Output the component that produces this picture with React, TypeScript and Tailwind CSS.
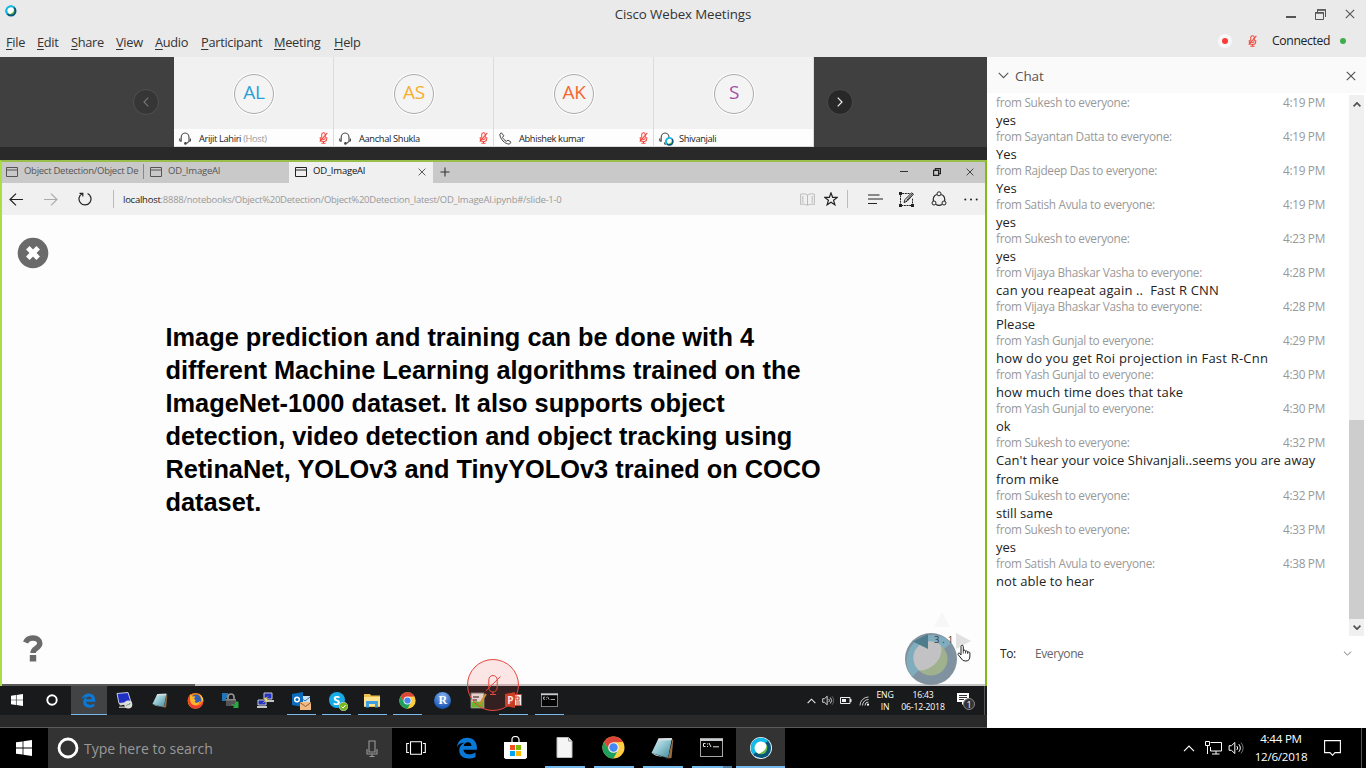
import React from "react";

type IconProps = { w: number; h: number; box?: string; className?: string; children: React.ReactNode };

function Svg({ w, h, box, className = "", children }: IconProps) {
  return (
    <svg width={w} height={h} viewBox={box ?? `0 0 ${w} ${h}`} fill="none" className={`shrink-0 ${className}`}>
      {children}
    </svg>
  );
}

function WebexBall({ size }: { size: number }) {
  return (
    <Svg w={size} h={size} box="0 0 24 24">
      <circle cx="12" cy="12" r="12" fill="#e9f4f8" />
      <circle cx="12" cy="12" r="11" fill="#07557c" />
      <path d="M3.6 19.2A11 11 0 0 1 19.5 4L12 12Z" fill="#12bbea" />
      <circle cx="12" cy="12" r="6.9" fill="#6fbe4a" />
      <path d="M5.6 14.6A6.9 6.9 0 0 1 17.8 8.2Q18.6 15 9.6 18.3Q6.6 17 5.6 14.6Z" fill="#fff" />
    </Svg>
  );
}

function MutedMic() {
  return (
    <Svg w={9} h={12} box="0 0 9 13">
      <g stroke="#f0463c" strokeWidth="1.1">
        <rect x="2.6" y="0.7" width="3.8" height="7.4" rx="1.9" />
        <path d="M1 5.5v1.7a3.5 3 0 0 0 7 0V5.5M4.5 10.2v2M2.2 12.3h4.6M8.7 1L.4 10.4" />
      </g>
    </Svg>
  );
}

function Headset() {
  return (
    <Svg w={12} h={13}>
      <path d="M2.7 9.2H1.6a1 1 0 0 1-.9-1V6.6M2.2 5.4v3.8M2.2 5.6a3.9 4.6 0 0 1 7.8 0v3.6M10 9.2h.5a1 1 0 0 0 1-1V6.4M9.6 9.4c-.3 1.3-1.2 1.8-2.3 2" stroke="#444" strokeWidth="1.1" />
      <circle cx="6.4" cy="11.4" r="1.3" fill="#444" />
    </Svg>
  );
}

function Phone() {
  return (
    <Svg w={13} h={13}>
      <path d="M.8 2.2L2.4.8l2.4 3-1.3 1.5c.8 1.7 2 3 3.8 4l1.7-1.2 3 2.1-1.5 1.9C6 12.3 1 7 .8 2.2Z" stroke="#444" strokeWidth="1" strokeLinejoin="round" />
    </Svg>
  );
}

function CloseX({ size, color = "#444", sw = 1.1 }: { size: number; color?: string; sw?: number }) {
  return (
    <Svg w={size} h={size} box="0 0 10 10">
      <path d="M.8.8l8.4 8.4M9.2.8L.8 9.2" stroke={color} strokeWidth={sw} />
    </Svg>
  );
}

function EdgeLogo({ size }: { size: number }) {
  return (
    <Svg w={size} h={size} box="0 0 24 24">
      <path
        d="M1 10.800C1.900 4.200 6.700.8 12.200.8 18.600.8 22.800 5.200 22.800 11.400v2.500H8.200c.2 3.300 3 4.900 6.400 4.900 2.500 0 4.700-.8 6.700-2v4.900c-2.200 1.200-4.700 1.800-7.500 1.800-6.200 0-10.300-3.400-10.300-8.700 0-3.900 2.200-7 5.600-8.500C5.700 6.200 2.800 7.800 1 10.800ZM8.400 9.900h8.500c0-2.500-1.200-4.300-3.900-4.300-2.500 0-4.200 1.800-4.600 4.300Z"
        fill="#0a78d7"
      />
    </Svg>
  );
}

function Chrome({ size }: { size: number }) {
  return (
    <Svg w={size} h={size} box="0 0 24 24">
      <circle cx="12" cy="12" r="11.500" fill="#ffcd41" />
      <path d="M2.040 6.250A11.500 11.500 0 0 1 21.960 6.250L12 6.600 7.300 14.700Z" fill="#dc4437" />
      <path d="M2.040 6.250L7.300 14.700 12 17.400 16.700 14.700 12 23.500A11.500 11.500 0 0 1 2.040 6.250Z" fill="#1da05e" />
      <circle cx="12" cy="12" r="5.600" fill="#f3f3f3" />
      <circle cx="12" cy="12" r="4.400" fill="#4688f1" />
    </Svg>
  );
}

function WindowsLogo({ size }: { size: number }) {
  return (
    <Svg w={size} h={size} box="0 0 16 16">
      <path d="M0 2.300L6.600 1.400V7.600H0ZM7.400 1.300L16 0V7.600H7.400ZM0 8.400H6.600V14.600L0 13.700ZM7.400 8.400H16V16L7.400 14.700Z" fill="#fff" />
    </Svg>
  );
}

function NotepadIcon({ w, h }: { w: number; h: number }) {
  return (
    <Svg w={w} h={h} box="0 0 22 22">
      <defs>
        <linearGradient id="pad" x1="0" y1="0" x2="1" y2="1">
          <stop offset="0" stopColor="#e4f4f5" />
          <stop offset="0.500" stopColor="#8dc4cf" />
          <stop offset="1" stopColor="#3e8496" />
        </linearGradient>
      </defs>
      <path d="M21 2l.8 1-1.800 18-3.500.6Z" fill="#9a6a3c" />
      <path d="M0 16L14 21 17 21.500 4 18.500Z" fill="#d6e6e8" />
      <path d="M7 1.500L20.500 1 16.500 21 0 16Z" fill="url(#pad)" />
      <path d="M7 1.500l13.500-.5-.5 2.200-13.900.3Z" fill="#d9dfe0" />
    </Svg>
  );
}

function CmdIcon({ w, h }: { w: number; h: number }) {
  return (
    <Svg w={w} h={h} box="0 0 23 19">
      <rect x="0.500" y="0.500" width="22" height="18" fill="#050505" stroke="#a9a9a9" />
      <path d="M0 1h23v2H0Z" fill="#c8ccd0" />
      <path d="M5.500 5.500H3.500V8.500H5.500M7.500 5.500v1M7.500 8v1M9 5l2 4M13 8.800h6" stroke="#e5e5e5" strokeWidth="1" />
    </Svg>
  );
}

function Caret({ w, h, dir, color, sw = 1.200 }: { w: number; h: number; dir: "up" | "down" | "left" | "right"; color: string; sw?: number }) {
  const d = { up: "M.7 5.300L5 1l4.300 4.300", down: "M.7.7L5 5 9.300.7", left: "M5.300.7L1 5l4.300 4.300", right: "M.7.7L5 5 .7 9.300" }[dir];
  const box = dir === "up" || dir === "down" ? "0 0 10 6" : "0 0 6 10";
  return (
    <Svg w={w} h={h} box={box}>
      <path d={d} stroke={color} strokeWidth={sw} />
    </Svg>
  );
}

function Speaker({ w, h }: { w: number; h: number }) {
  return (
    <Svg w={w} h={h} box="0 0 16 14">
      <path d="M.6 4.700H3L6.300 1.500V12.500L3 9.300H.6Z" stroke="#fff" />
      <path d="M8.300 5a3 3 0 0 1 0 4M10.300 3.200a5.500 5.500 0 0 1 0 7.600" stroke="#fff" />
      <path d="M12.500 1.600a8 8 0 0 1 0 10.800" stroke="#777" />
    </Svg>
  );
}

/* ---------- Title and menu ---------- */

const menu = [
  ["File", "w-[31px]"],
  ["Edit", "w-[34px]"],
  ["Share", "w-[45px]"],
  ["View", "w-[39px]"],
  ["Audio", "w-[46px]"],
  ["Participant", "w-[73px]"],
  ["Meeting", "w-[60px]"],
  ["Help", "w-[40px]"],
];

function TopBar() {
  return (
    <header className="h-[57px] shrink-0 bg-[#eaeaea] text-[#333]">
      <div className="grid h-[28px] grid-cols-[1fr_auto_1fr] items-center">
        <div className="-mt-[6px] pl-[5px]"><WebexBall size={12} /></div>
        <div className="pt-px text-[13.300px] tracking-[-0.100px]">Cisco Webex Meetings</div>
        <div className="flex items-center justify-end gap-[19px] pr-[11px]">
          <div className="mt-[5px] h-[2px] w-[10px] bg-[#555]" />
          <Svg w={11} h={11}>
            <path d="M.5 3.500h8v7h-8ZM2.500 3V.8h8V8" stroke="#555" />
            <path d="M0 4h9M2 1h9" stroke="#555" strokeWidth="1.600" />
          </Svg>
          <CloseX size={10} color="#555" />
        </div>
      </div>
      <div className="flex h-[29px] items-center justify-between">
        <nav className="flex items-center pl-[6px] text-[12.800px] tracking-[-0.300px]">
          {menu.map(([name, width]) => (
            <span key={name} className={width}>
              <span className="underline decoration-1 underline-offset-2">{name[0]}</span>
              {name.slice(1)}
            </span>
          ))}
        </nav>
        <div className="-mt-[3px] flex items-center pr-[20px]">
          <div className="mr-[16px] flex size-[14px] items-center justify-center rounded-full bg-[#f8f8f8]">
            <div className="size-[6px] rounded-full bg-[#fb3b35]" />
          </div>
          <MutedMic />
          <span className="ml-[15px] w-[68px] text-[12.200px] tracking-[-0.350px] text-[#222]">Connected</span>
          <div className="size-[6px] rounded-full bg-[#3fae49]" />
        </div>
      </div>
    </header>
  );
}

/* ---------- Participants ---------- */

const people = [
  { initials: "AL", name: "Arijit Lahiri", host: true, color: "text-[#2a9fd8]", device: "headset", muted: true },
  { initials: "AS", name: "Aanchal Shukla", host: false, color: "text-[#f9ae2b]", device: "headset", muted: true },
  { initials: "AK", name: "Abhishek kumar", host: false, color: "text-[#f4662f]", device: "phone", muted: true },
  { initials: "S", name: "Shivanjali", host: false, color: "text-[#a34fa8]", device: "presenter", muted: false },
];

function Participants() {
  return (
    <div className="flex h-[90px] shrink-0 bg-[#404040]">
      <div className="flex w-[174px] items-center justify-end pr-[15px]">
        <div className="flex size-[26px] items-center justify-center rounded-full border border-[#505050] bg-[#363636]">
          <Caret w={6} h={10} dir="left" color="#747474" />
        </div>
      </div>
      {people.map((p) => (
        <div key={p.name} className="flex w-[160px] flex-col border-r border-b border-[#dcdcdc] bg-[#f1f1f1]">
          <div className="flex h-[72px] items-center justify-center pt-px pl-px">
            <div className="flex size-[42px] items-center justify-center rounded-full bg-white">
              <div className={`flex size-[40px] items-center justify-center rounded-full border border-[#aaa] bg-[#f4f4f4] pb-[2px] text-[19px] tracking-[-0.3px] ${p.color}`}>{p.initials}</div>
            </div>
          </div>
          <div className="flex h-[17px] items-center bg-[#fdfdfd] pt-px pl-[5px] text-[9.300px] tracking-[-0.350px] text-[#222]">
            <div className="relative mr-[7px] w-[13px]">
              {p.device === "phone" ? <Phone /> : <Headset />}
              {p.device === "presenter" && (
                <div className="absolute top-[5px] left-[6px]"><WebexBall size={9} /></div>
              )}
            </div>
            <span className="flex-1 pt-[2px] whitespace-nowrap">
              {p.name}
              {p.host && <span className="text-[#999]"> (Host)</span>}
            </span>
            {p.muted && <div className="mr-[5px]"><MutedMic /></div>}
          </div>
        </div>
      ))}
      <div className="flex flex-1 items-center pl-[13px]">
        <div className="flex size-[26px] items-center justify-center rounded-full border border-[#4a4a4a] bg-[#282828]">
          <Caret w={6} h={10} dir="right" color="#eee" />
        </div>
      </div>
    </div>
  );
}

/* ---------- Shared browser ---------- */

function PageGlyph({ color }: { color: string }) {
  return (
    <Svg w={12} h={10}>
      <path d="M.5.5h11v9H.5ZM.5 3h11" stroke={color} />
    </Svg>
  );
}

function Browser() {
  return (
    <div className="relative flex h-[526px] flex-col border-x-2 border-t-2 border-t-[#98bf4b] border-r-[#80bb18] border-l-[#a9df45] bg-[#fdfdfd]">
      <div className="flex h-[21px] shrink-0 items-center bg-[#c9c9c9] pb-[2px] text-[9.500px] tracking-[-0.200px] text-[#555]">
        <div className="flex w-[142px] items-center gap-[6px] border-r border-[#888] pl-[4px] whitespace-nowrap">
          <PageGlyph color="#555" />
          <span className="tracking-[-0.270px]">Object Detection/Object De</span>
        </div>
        <div className="flex w-[145px] items-center gap-[6px] pl-[6px]">
          <PageGlyph color="#555" />
          <span>OD_ImageAI</span>
        </div>
        <div className="-mb-[2px] flex h-[21px] w-[144px] items-center gap-[6px] bg-[#f0f0f0] pr-[7px] pb-[2px] pl-[6px] text-[#111]">
          <PageGlyph color="#222" />
          <span className="flex-1">OD_ImageAI</span>
          <CloseX size={8} />
        </div>
        <Svg w={10} h={10} className="ml-[7px]">
          <path d="M5 .5v9M.5 5h9" stroke="#333" strokeWidth="1.100" />
        </Svg>
        <div className="flex flex-1 items-center justify-end gap-[25px] pr-[11px]">
          <div className="h-px w-[8px] bg-[#333]" />
          <Svg w={8} h={8}>
            <path d="M.6 2.400h5v5h-5ZM2.400 2V.6h5v5H6" stroke="#222" strokeWidth="1.200" />
          </Svg>
          <CloseX size={8} color="#333" />
        </div>
      </div>
      <div className="flex h-[32px] shrink-0 items-center bg-[#f0f0f0] pl-[7px] text-[9.500px]">
        <Svg w={14} h={13}>
          <path d="M14 6.500H1M7 .6L1 6.500l6 5.900" stroke="#222" strokeWidth="1.200" />
        </Svg>
        <Svg w={14} h={13} className="ml-[21px]">
          <path d="M0 6.500H13M7 .6l6 5.900-6 5.900" stroke="#aaa" strokeWidth="1.100" />
        </Svg>
        <Svg w={14} h={14} className="ml-[20px]">
          <path d="M9.600 1.500A6 6 0 1 1 4 1.700M4.800 4.600V1.300H1.500" stroke="#222" strokeWidth="1.200" />
        </Svg>
        <div className="ml-[21px] h-[18px] w-px bg-[#bbb]" />
        <span className="ml-[9px] flex-1 pt-[2px] tracking-[-0.250px] whitespace-nowrap text-[#999]">
          <span className="text-[#222]">localhost</span>:8888/notebooks/Object%20Detection/Object%20Detection_latest/OD_ImageAI.ipynb#/slide-1-0
        </span>
        <Svg w={15} h={13}>
          <path d="M7.500 2C5 .5 3 .7.6 1.200v10.300c2.500-.5 4.500-.5 6.900.8 2.400-1.300 4.400-1.300 6.900-.8V1.200C12 .7 10 .5 7.500 2Zm0 0v10M2.800 3v7M12.200 3v7" stroke="#bbb" />
        </Svg>
        <Svg w={14} h={14} className="ml-[9px]">
          <path d="M7 .9l1.600 4.400 4.600.1-3.600 2.900 1.300 4.500L7 10.200l-3.900 2.600 1.300-4.500L.8 5.400l4.600-.1Z" stroke="#222" strokeWidth="1.200" />
        </Svg>
        <div className="ml-[9px] h-[18px] w-px bg-[#bbb]" />
        <Svg w={15} h={11} className="ml-[20px]">
          <path d="M0 1h11.500M0 5h15M0 9.500h9" stroke="#222" strokeWidth="1.100" />
        </Svg>
        <Svg w={15} h={15} className="ml-[16px]">
          <path d="M10.500 1.500h-9v12h12V6" stroke="#222" strokeDasharray="2 .7" />
          <path d="M0 0h3v3H0ZM0 12h3v3H0ZM12 12h3v3h-3Z" fill="#222" />
          <path d="M14 1L7.500 8.500M5 10.500l1-3L12.500.8 14.400 2.300 8 9.300Z" stroke="#222" />
        </Svg>
        <Svg w={16} h={16} className="ml-[17px]">
          <path d="M5.800 3.500C3 4.500 2 7.500 2.400 10M10.200 3.500C13 4.500 14 7.500 13.600 10M5 13.500c2 1.200 4 1.200 6 0" stroke="#222" strokeWidth="1.100" />
          <circle cx="8" cy="2.800" r="2" stroke="#222" />
          <circle cx="3" cy="12" r="2" stroke="#222" />
          <circle cx="13" cy="12" r="2" stroke="#222" />
        </Svg>
        <Svg w={14} h={3} className="mr-[7px] ml-[17px]">
          <circle cx="1.300" cy="1.500" r="1" fill="#222" />
          <circle cx="7" cy="1.500" r="1" fill="#222" />
          <circle cx="12.700" cy="1.500" r="1" fill="#222" />
        </Svg>
      </div>

      <div className="flex flex-1 flex-col items-start">
        <Svg w={32} h={32} className="mt-[22px] ml-[15px]">
          <circle cx="16" cy="16" r="15.300" fill="#6a6a6a" />
          <path d="M10.800 10.800l10.400 10.400M21.200 10.800L10.800 21.200" stroke="#fff" strokeWidth="5" />
        </Svg>
        <h1 className="mt-[52px] ml-[163.500px] font-['Liberation_Sans',sans-serif] text-[25.350px] leading-[33px] font-bold whitespace-nowrap text-black">
          Image prediction and training can be done with 4<br />
          different Machine Learning algorithms trained on the<br />
          ImageNet-1000 dataset. It also supports object<br />
          detection, video detection and object tracking using<br />
          RetinaNet, YOLOv3 and TinyYOLOv3 trained on COCO<br />
          dataset.
        </h1>
        <Svg w={20} h={27} className="mt-[116px] ml-[21px]">
          <path d="M2.500 7.500C4 4.200 6.500 2.900 10 3c4.200.1 6.800 2.200 6.800 5.300 0 5.300-6.800 4.500-6.800 9.700" stroke="#6a6a6a" strokeWidth="5.400" />
          <path d="M6.800 20h6.400v6.500H6.800Z" fill="#6a6a6a" />
        </Svg>
      </div>
      <div className="flex h-[2px] shrink-0 bg-[#c4c4c4]">
        <div className="w-[193px] bg-[#595959]" />
      </div>

      <Svg w={76} h={88} className="absolute top-[438px] left-[900px]">
        <path d="M40 12l8 15H32Z" fill="#f7f7f7" />
        <path d="M54 33l15 8-15 8Z" fill="#e1e1e1" />
      </Svg>
      <div className="absolute top-[471px] left-[903px] size-[52px]">
        <Svg w={52} h={52}>
          <circle cx="26" cy="26" r="26" fill="#80929f" />
          <path d="M7 43.700A26 26 0 0 1 46.500 10L26 26Z" fill="#7fadbd" />
          <circle cx="26" cy="26" r="16.500" fill="#9fb28d" />
          <path d="M14 37.500A16.500 16.500 0 0 1 36 12.500C39 26 26 38 14 37.500Z" fill="#c2c2c4" />
          <path d="M8 8.500L23 1v15Z" fill="#4f7c8c" />
        </Svg>
      </div>
      <div className="absolute top-[471px] left-[932px] text-[9.500px] tracking-[0.200px] text-[#333]">3 . 1</div>
      <Svg w={15} h={18} className="absolute top-[482px] left-[955px]">
        <path d="M4 11V2.500C4 .8 6.300.8 6.300 2.500V7c0-1.200 2-1.200 2.200 0v.6c.3-1 2-.9 2.200.3v.6c.4-.9 2.200-.6 2.200.6V12c0 3-1 5-4 5-3.200 0-4-1.500-5-3L1 10.500C.7 9 2.400 8.800 3 9.600Z" fill="#fff" stroke="#222" strokeLinejoin="round" />
        <path d="M6.300 7v2.500M8.500 7.500v2M10.700 8v2" stroke="#222" strokeWidth=".8" />
      </Svg>
    </div>
  );
}

/* ---------- Shared taskbar ---------- */

const sharedApps: { icon: React.ReactNode; state?: "active" | "open" }[] = [
  { icon: <div className="pr-[3px]"><WindowsLogo size={12} /></div> },
  { icon: <div className="pr-[4px]"><Svg w={12} h={12}><circle cx="6" cy="6" r="4.700" stroke="#fff" strokeWidth="1.900" /></Svg></div> },
  { icon: <EdgeLogo size={15} />, state: "active" },
  {
    icon: (
      <Svg w={17} h={17}>
        <path d="M1 1.500L12 .5l3 9.500L3 11.500Z" fill="#2130c4" stroke="#c6cbe4" />
        <path d="M3 11.500l12-1.500 1 1.500-12 2Z" fill="#d8d8d8" />
        <path d="M3 14.500h8V16H3Z" fill="#aaa" />
        <circle cx="12.300" cy="12.500" r="4" fill="#dedede" />
        <path d="M10.500 13.800l1.500-1.500M12.500 13l1.600-1.900" stroke="#3c9454" />
      </Svg>
    ),
  },
  { icon: <NotepadIcon w={16} h={15} /> },
  {
    icon: (
      <Svg w={17} h={17}>
        <circle cx="8.500" cy="8.800" r="7.900" fill="#ff8717" />
        <path d="M2 4C-.5 9 2 16.600 9 16.600c5 0 8-4.600 7-8.600-1 4-4 6-7 5.500C4 13 3 8 4.500 5L3.500 2Z" fill="#ec3f32" />
        <circle cx="9" cy="7.500" r="5" fill="#2c5db7" />
        <path d="M3.500 2l2 2.500 3-.3c-.5 2-1.500 1.500-1.500 2.800 2 .5 2.200 2 .5 2.700 1.500 1.800 4 1 5.500-1C13 12 9 14.500 5.500 12.500 2.500 10.500 2.500 6 3.500 2Z" fill="#ffb52a" />
        <path d="M12 1.500c3 2.500 4.800 5 4 9-1-4-2-6-4-9Z" fill="#ffe23c" />
      </Svg>
    ),
  },
  {
    icon: (
      <Svg w={17} h={17}>
        <path d="M0 1h6v5H4v3H0Z" fill="#2375ba" />
        <path d="M6 8V5a3 3 0 0 1 6 0v3" stroke="#959595" strokeWidth="1.600" />
        <path d="M4 7h10v7H4Z" fill="#555" />
        <path d="M4 7h10v1.500H4Z" fill="#888" />
        <path d="M9 12h2l2 1V9.500h3.500V16H11l1-1.500Z" fill="#2ba843" />
      </Svg>
    ),
  },
  {
    icon: (
      <Svg w={17} h={17}>
        <path d="M7 1h8v6H7Z" fill="#2331c3" stroke="#ccc" />
        <path d="M9 8h8v2H9Z" fill="#c5c5c5" />
        <path d="M1 8h8v5H1Z" fill="#2331c3" stroke="#ccc" />
        <path d="M0 14h10v2H0Z" fill="#c5c5c5" />
        <path d="M12 4L7 6.500l2 1.500-4 3.500 6-3.500-2-1.500Z" fill="#ffe735" />
      </Svg>
    ),
  },
  {
    icon: (
      <Svg w={19} h={19} className="mt-[2px]">
        <path d="M8 4h10v7H8Z" fill="#cde2f4" />
        <path d="M8 5l5 4 5-4" stroke="#1771bf" />
        <path d="M0 2l11-2v15L0 13Z" fill="#0b6cbe" />
        <circle cx="5" cy="7.500" r="2.300" stroke="#fff" strokeWidth="1.500" />
        <path d="M8 10h11v8H8Z" fill="#f0b984" />
        <path d="M8 10.500l5.500 4 5.500-4" stroke="#8d6038" />
      </Svg>
    ),
    state: "open",
  },
  {
    icon: (
      <div className="relative flex size-[16px] items-center justify-center rounded-full bg-[#18aae6] text-[13px] leading-none font-bold text-white">
        S
        <Svg w={9} h={9} className="absolute -right-[3px] -bottom-[3px]">
          <circle cx="4.500" cy="4.500" r="4.300" fill="#79b51d" stroke="#e9f2dc" strokeWidth=".6" />
          <path d="M2.600 4.500L4 6l2.600-3" stroke="#fff" />
        </Svg>
      </div>
    ),
    state: "open",
  },
  {
    icon: (
      <Svg w={16} h={15}>
        <path d="M0 1h6l1 1.500h9V14H0Z" fill="#eebf4b" />
        <path d="M0 4h16v9H0Z" fill="#fde290" />
        <path d="M2 8h12v6.500h-3V11H5v3.500H2Z" fill="#3f9fe3" />
      </Svg>
    ),
    state: "open",
  },
  { icon: <Chrome size={17} />, state: "open" },
  {
    icon: (
      <div className="flex size-[17px] items-center justify-center rounded-full bg-[radial-gradient(circle_at_50%_25%,#86b5ee,#1c57b5_75%)] font-['Liberation_Serif',serif] text-[12px] leading-none font-bold text-white">
        R
      </div>
    ),
  },
  {
    icon: (
      <Svg w={17} h={17}>
        <path d="M1 1h13v15H1Z" fill="#e5e5de" stroke="#777" />
        <path d="M3 5h6M3 8h4" stroke="#555" strokeWidth="1.500" />
        <path d="M1.500 10c5-2 6 1 12-1v6.500h-12Z" fill="#65b82d" />
        <path d="M16 2L9.500 12.500" stroke="#c69a29" strokeWidth="2" />
      </Svg>
    ),
  },
  {
    icon: (
      <div className="relative flex h-[16px] w-[17px] items-center">
        <Svg w={17} h={16}>
          <path d="M8 2.500h8.500v11H8Z" fill="#f4eeee" stroke="#b94a35" />
          <path d="M11 5h3v3h-3ZM11 10h4M11 12h4" stroke="#c34328" />
          <path d="M0 2L10 0V16L0 14Z" fill="#c63d20" />
        </Svg>
        <span className="absolute left-[2px] text-[10px] leading-none font-bold text-white">P</span>
      </div>
    ),
    state: "open",
  },
  { icon: <CmdIcon w={17} h={14} />, state: "open" },
];

function SharedTaskbar() {
  return (
    <div className="flex h-[29px] shrink-0 bg-[#191a1b] pl-[0.500px]">
      {sharedApps.map((app, i) => (
        <div
          key={i}
          className={`flex w-[35.400px] shrink-0 flex-col items-center ${app.state === "active" ? "bg-[#414345]" : ""}`}
        >
          <div className="flex h-[28px] items-center">{app.icon}</div>
          {app.state === "open" && <div className="h-px w-[29px] bg-[#76b9ed]" />}
          {app.state === "active" && <div className="h-px w-full bg-[#76b9ed]" />}
        </div>
      ))}
      <div className="flex flex-1 items-center justify-end text-[8.700px] leading-[12px] tracking-[-0.150px] text-white">
        <Caret w={9} h={6} dir="up" color="#eee" />
        <div className="ml-[6px]"><Speaker w={13} h={11} /></div>
        <Svg w={12} h={7} className="ml-[5px]">
          <path d="M.5.500h9.500v6H.5Z" stroke="#eee" />
          <path d="M2 2h4v3H2ZM10 2h1.500v3H10Z" fill="#eee" />
        </Svg>
        <Svg w={11} h={10} className="ml-[7px]">
          <path d="M1 9.500A8.500 8.500 0 0 1 9.500 1M3.500 9.500a6 6 0 0 1 6-6M6 9.500A3.500 3.500 0 0 1 9.500 6" stroke="#ccc" />
          <circle cx="9" cy="8.700" r="1.100" fill="#fff" />
        </Svg>
        <div className="ml-[5px] w-[20px] text-center">ENG<br />IN</div>
        <div className="ml-[5px] w-[46px] text-center tracking-[-0.200px] whitespace-nowrap">16:43<br />06-12-2018</div>
        <div className="relative mr-[9px] ml-[11px] h-[17px] w-[18px]">
          <Svg w={12} h={12} className="mt-px">
            <path d="M0 0h12v9H8l-3 3V9H0Z" fill="#fff" />
            <path d="M2 2.500h8M2 4.500h8M2 6.500h5" stroke="#333" />
          </Svg>
          <div className="absolute top-[6px] left-[6px] flex size-[12px] items-center justify-center rounded-full border border-[#888] bg-[#333] text-[9px] leading-none">1</div>
        </div>
        <div className="h-full w-px bg-[#555]" />
        <div className="w-[2px]" />
      </div>
    </div>
  );
}

function SharedScreen() {
  return (
    <section className="relative flex w-[987px] shrink-0 flex-col bg-[#292929]">
      <Participants />
      <div className="h-[13px] shrink-0" />
      <Browser />
      <SharedTaskbar />
      <div className="flex-1 border-b border-[#5a5a5a]" />
      <div className="absolute top-[602px] left-[467px] flex size-[52px] items-center justify-center rounded-full border border-[#e8473f] bg-[#f04a43]/13">
        <Svg w={16} h={21}>
          <rect x="3.800" y="0.500" width="8.400" height="16.500" rx="4.200" stroke="#e8473f" />
          <path d="M8 17v2.500M5 19.500h6M15.500 1.500L.8 16" stroke="#e8473f" />
        </Svg>
      </div>
    </section>
  );
}

/* ---------- Chat ---------- */

const messages: [string, string, string, string?][] = [
  ["Sukesh", "4:19 PM", "yes"],
  ["Sayantan Datta", "4:19 PM", "Yes"],
  ["Rajdeep Das", "4:19 PM", "Yes"],
  ["Satish Avula", "4:19 PM", "yes"],
  ["Sukesh", "4:23 PM", "yes"],
  ["Vijaya Bhaskar Vasha", "4:28 PM", "can you reapeat again ..  Fast R CNN", "tracking-[0.140px]"],
  ["Vijaya Bhaskar Vasha", "4:28 PM", "Please"],
  ["Yash Gunjal", "4:29 PM", "how do you get Roi projection in Fast R-Cnn", "tracking-[0.210px]"],
  ["Yash Gunjal", "4:30 PM", "how much time does that take", "tracking-[0.120px]"],
  ["Yash Gunjal", "4:30 PM", "ok"],
  ["Sukesh", "4:32 PM", "Can't hear your voice Shivanjali..seems you are away\nfrom mike", "tracking-[0.040px]"],
  ["Sukesh", "4:32 PM", "still same"],
  ["Sukesh", "4:33 PM", "yes"],
  ["Satish Avula", "4:38 PM", "not able to hear", "tracking-[0.100px]"],
];

function Chat() {
  return (
    <aside className="flex flex-1 flex-col bg-white">
      <div className="flex h-[36px] shrink-0 items-center bg-[#fafafa] pt-px pr-[10px] pl-[11px]">
        <Caret w={11} h={7} dir="down" color="#555" sw={1} />
        <span className="mt-px ml-[6px] flex-1 text-[13.500px] tracking-[-0.100px] text-[#555]">Chat</span>
        <CloseX size={10} color="#555" sw={1.200} />
      </div>
      <div className="mt-[2px] flex h-[541px] shrink-0">
        <div className="w-[362px] shrink-0 pr-[24px] pl-[9px]">
          {messages.map(([from, time, text, spacing], i) => (
            <div key={i}>
              <div className="flex h-[15px] items-center justify-between pt-px text-[11.800px] tracking-[-0.290px] text-[#999]">
                <span>from {from} to everyone:</span>
                <span>{time}</span>
              </div>
              <p className={`-mb-px pt-px text-[13px] leading-[19px] whitespace-pre text-[#222] ${spacing ?? ""}`}>{text}</p>
            </div>
          ))}
        </div>
        <div className="flex w-[15px] flex-col items-center justify-between bg-[#f0f0f0]">
          <div className="flex h-[18px] items-center"><Caret w={8} h={5} dir="up" color="#505050" sw={2.200} /></div>
          <div className="mt-auto h-[199px] w-full bg-[#cdcdcd]" />
          <div className="flex h-[17px] items-center"><Caret w={8} h={5} dir="down" color="#505050" sw={2.200} /></div>
        </div>
      </div>
      <div className="mt-[8px] flex h-[18px] items-center pt-px pr-[14px] pl-[13px] text-[12px] tracking-[-0.400px]">
        <span className="w-[35px] text-[#222]">To:</span>
        <span className="flex-1 text-[#666]">Everyone</span>
        <Caret w={9} h={5} dir="down" color="#777" />
      </div>
    </aside>
  );
}

/* ---------- Local taskbar ---------- */

const localApps: { icon: React.ReactNode; state?: "open" | "multi" | "active" }[] = [
  { icon: <EdgeLogo size={22} /> },
  {
    icon: (
      <Svg w={23} h={23}>
        <path d="M8 6V3.500a3.500 3 0 0 1 7 0V6" stroke="#fff" strokeWidth="1.200" />
        <path d="M0 6h23v15.500L21.500 23h-20L0 21.500Z" fill="#fff" />
        <path d="M6 9h5v5H6Z" fill="#f25022" />
        <path d="M12 9h5v5h-5Z" fill="#7fba00" />
        <path d="M6 15h5v5H6Z" fill="#00a4ef" />
        <path d="M12 15h5v5h-5Z" fill="#ffb900" />
      </Svg>
    ),
  },
  {
    icon: (
      <Svg w={17} h={21}>
        <path d="M1 .5h11.500L16 4v16.500H1Z" fill="#f5f5f5" stroke="#bbb" />
        <path d="M12.500.5V4H16" stroke="#999" />
      </Svg>
    ),
    state: "open",
  },
  { icon: <Chrome size={23} />, state: "open" },
  { icon: <NotepadIcon w={23} h={22} />, state: "open" },
  { icon: <CmdIcon w={23} h={19} />, state: "multi" },
  { icon: <WebexBall size={22} />, state: "active" },
];

function LocalTaskbar() {
  return (
    <footer className="flex h-[40px] shrink-0 bg-black">
      <div className="flex w-[48px] items-center justify-center"><WindowsLogo size={16} /></div>
      <div className="flex w-[344px] items-center bg-[#333] pr-[14px] pl-[9px]">
        <Svg w={22} h={22}><circle cx="11" cy="11" r="9" stroke="#fff" strokeWidth="2.800" /></Svg>
        <span className="ml-[5px] flex-1 text-[14px] text-[#999]">Type here to search</span>
        <Svg w={12} h={17}>
          <path d="M3 1h6v11H3ZM1 9v5h10V9M6 14v3M3.500 16.500h5" stroke="#999" strokeWidth="1.100" />
        </Svg>
      </div>
      <div className="flex w-[50px] items-center pl-[14px]">
        <Svg w={20} h={14}>
          <path d="M4.500.7h11v12.600h-11ZM3 2.500H.7v9H3M17 2.500h2.300v9H17" stroke="#fff" strokeWidth="1.100" />
        </Svg>
      </div>
      {localApps.map((app, i) => (
        <div key={i} className={`flex w-[49px] flex-col items-center ${app.state === "active" ? "bg-[#333]" : ""}`}>
          <div className="flex h-[38px] items-center pt-px">{app.icon}</div>
          {app.state === "open" && <div className="h-[2px] w-[40px] bg-[#76b9ed]" />}
          {app.state === "multi" && <div className="h-[2px] w-[40px] border-r-9 border-[#4f80a6] bg-[#76b9ed]" />}
          {app.state === "active" && <div className="h-[2px] w-full bg-[#76b9ed]" />}
        </div>
      ))}
      <div className="flex flex-1 items-center justify-end text-white">
        <Caret w={12} h={7} dir="up" color="#fff" sw={1} />
        <Svg w={17} h={14} className="ml-[10px]">
          <path d="M5.500 1.500h11v8.500h-11V6M11 10v3M7 13h7.500M.5.500h4v4h-4ZM2.500 4.500V13" stroke="#fff" />
        </Svg>
        <div className="ml-[6px]"><Speaker w={17} h={14} /></div>
        <div className="ml-[9px] w-[54px] text-center text-[11.600px] leading-[18px] tracking-[-0.250px] whitespace-nowrap">4:44 PM<br />12/6/2018</div>
        <Svg w={17} h={16} className="mr-[20px] ml-[16px]">
          <path d="M.6.600h15.800v12H11l-2.500 2.700L6 12.600H.6Z" stroke="#fff" strokeWidth="1.100" />
        </Svg>
        <div className="h-full w-px bg-[#555]" />
        <div className="w-[4px]" />
      </div>
    </footer>
  );
}

export default function App() {
  return (
    <div className="flex h-[768px] w-[1366px] flex-col overflow-hidden bg-white font-['Open_Sans','Noto_Sans',sans-serif]">
      <TopBar />
      <main className="flex h-[671px] shrink-0">
        <SharedScreen />
        <Chat />
      </main>
      <LocalTaskbar />
    </div>
  );
}
